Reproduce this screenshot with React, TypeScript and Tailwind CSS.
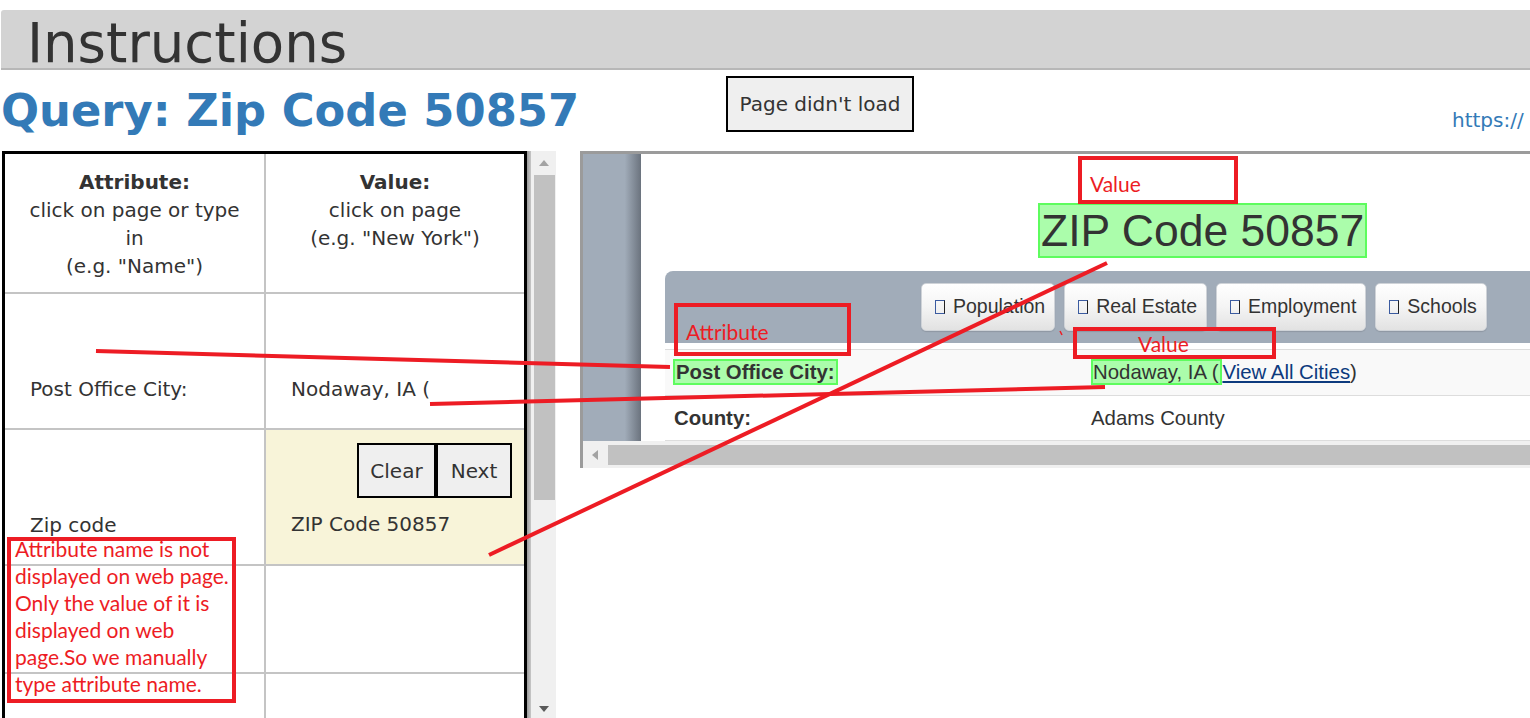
import React from "react";

const RED = "#ed1c24";

function Tofu() {
  return <span className="inline-block w-[10px] h-[14px] border border-[#3b5ba0] border-r-[#222] box-border" />;
}

function NavButton({ label }: { label: string }) {
  return (
    <div className="h-[48px] flex items-center gap-[8px] pl-[13px] pr-[9px] rounded-[5px] border border-[#cfd3d8] bg-[linear-gradient(to_bottom,#ffffff_0%,#f4f4f4_50%,#e2e2e2_100%)] shadow-[0_1px_1px_rgba(0,0,0,0.12)] text-[19.5px] text-[#333] whitespace-nowrap">
      <Tofu />
      <span>{label}</span>
    </div>
  );
}

function Cell({ children, className = "" }: { children?: React.ReactNode; className?: string }) {
  return <div className={"pl-[25px] pt-[81px] leading-[28px] whitespace-nowrap " + className}>{children}</div>;
}

export default function App() {
  return (
    <div className="relative w-[1530px] h-[718px] overflow-hidden bg-white text-[#333] font-['DejaVu_Sans',Verdana,sans-serif]">
      {/* Header bar */}
      <div className="mt-[10px] ml-[1px] h-[60px] box-border border-b-2 border-[#b7b7b7] bg-[#d3d3d3] rounded-tl-[3px] pl-[26px] pt-[6px] text-[54.5px] leading-[54px] text-[#333] whitespace-nowrap">
        Instructions
      </div>

      {/* Title row */}
      <div className="flex h-[81px]">
        <h1 className="w-[726px] shrink-0 pl-[1px] pt-[15px] text-[44.8px] leading-[52px] font-bold text-[#337ab7] whitespace-nowrap">
          Query: Zip Code 50857
        </h1>
        <button className="mt-[6px] w-[188px] h-[56px] shrink-0 box-border border-2 border-black bg-[#efefef] text-[20px] text-[#333] whitespace-nowrap">
          Page didn't load
        </button>
        <a className="ml-[538px] mt-[36px] text-[20px] leading-[28px] text-[#337ab7] whitespace-nowrap">https://</a>
      </div>

      {/* Main area */}
      <div className="flex h-[567px] items-start">
        {/* Left table */}
        <div className="ml-[2px] w-[525px] h-full shrink-0 box-border border-[3px] border-b-0 border-black overflow-hidden text-[20px] text-[#333]">
          {/* header row */}
          <div className="flex h-[140px] box-border border-b-2 border-[#c4c4c4]">
            <div className="w-[261px] shrink-0 box-border border-r-2 border-[#c4c4c4] pt-[14px] text-center leading-[28px]">
              <div className="font-bold">Attribute:</div>
              <div>click on page or type</div>
              <div>in</div>
              <div>(e.g. "Name")</div>
            </div>
            <div className="flex-1 pt-[14px] text-center leading-[28px]">
              <div className="font-bold">Value:</div>
              <div>click on page</div>
              <div>(e.g. "New York")</div>
            </div>
          </div>
          {/* row 2 */}
          <div className="flex h-[136px] box-border border-b-2 border-[#c4c4c4]">
            <Cell className="w-[261px] shrink-0 box-border border-r-2 border-[#c4c4c4]">Post Office City:</Cell>
            <Cell className="flex-1">Nodaway, IA (</Cell>
          </div>
          {/* row 3 */}
          <div className="flex h-[136px] box-border border-b-2 border-[#c4c4c4]">
            <Cell className="w-[261px] shrink-0 box-border border-r-2 border-[#c4c4c4]">Zip code</Cell>
            <div className="flex-1 flex flex-col bg-[#f8f4d9]">
              <div className="mt-[13px] mr-[12px] self-end flex">
                <button className="w-[79px] h-[55px] box-border border-2 border-black bg-[#efefef] text-[20px] text-[#333]">Clear</button>
                <button className="w-[76px] h-[55px] box-border border-2 border-black bg-[#efefef] text-[20px] text-[#333]">Next</button>
              </div>
              <div className="mt-[12px] pl-[25px] leading-[28px] whitespace-nowrap">ZIP Code 50857</div>
            </div>
          </div>
          {/* row 4 */}
          <div className="flex h-[108px] box-border border-b-2 border-[#c4c4c4]">
            <div className="w-[261px] shrink-0 box-border border-r-2 border-[#c4c4c4]" />
            <div className="flex-1" />
          </div>
          {/* row 5 */}
          <div className="flex h-[108px] box-border border-b-2 border-[#c4c4c4]">
            <div className="w-[261px] shrink-0 box-border border-r-2 border-[#c4c4c4]" />
            <div className="flex-1" />
          </div>
        </div>
        {/* shadow strip */}
        <div className="w-[4px] h-full shrink-0 bg-[linear-gradient(to_right,#9a9a9a,#c8c8c8)]" />
        {/* vertical scrollbar */}
        <div className="w-[25px] h-full shrink-0 bg-[#f0f0f0] flex flex-col items-center">
          <div className="mt-[9px] w-0 h-0 border-l-[5px] border-r-[5px] border-b-[6px] border-l-transparent border-r-transparent border-b-[#a3a3a3]" />
          <div className="mt-[9px] ml-[2px] w-[21px] h-[325px] bg-[#c1c1c1]" />
          <div className="mt-auto mb-[6px] w-0 h-0 border-l-[5px] border-r-[5px] border-t-[6px] border-l-transparent border-r-transparent border-t-[#5a5a5a]" />
        </div>

        {/* Right frame */}
        <div className="ml-[24px] flex-1 min-w-0 h-[317px] box-border border-t-[3px] border-l-[3px] border-[#9b9b9b] flex flex-col overflow-hidden">
          <div className="flex h-[287px] shrink-0">
            <div className="w-[58px] shrink-0 h-full bg-[linear-gradient(to_right,#a1acb9_0%,#a1acb9_72%,#6b737e_100%)]" />
            <div className="flex-1 min-w-0 overflow-hidden font-['Liberation_Sans',Arial,sans-serif] text-[#333]">
              <div className="flex pt-[49px] pl-[397px] whitespace-nowrap">
                <span className="inline-block border-2 border-[#5efc5e] bg-[#abfdab] px-[1px] text-[44.5px] leading-[51px]">
                  ZIP Code 50857
                </span>
              </div>
              <div className="mt-[13px] ml-[24px] w-[1000px] h-[72px] bg-[#a1acb9] rounded-tl-[8px] flex items-start pt-[12px] pl-[256px] gap-[9px]">
                <NavButton label="Population" />
                <NavButton label="Real Estate" />
                <NavButton label="Employment" />
                <NavButton label="Schools" />
              </div>
              <div className="mt-[6px] ml-[24px] w-[1000px] border-t border-[#dddddd] text-[20.4px]">
                <div className="flex items-center h-[46px] box-border border-b border-[#dddddd] bg-[#f9f9f9] whitespace-nowrap">
                  <div className="w-[426px] shrink-0 pl-[8px]">
                    <span className="border-2 border-[#5efc5e] bg-[#abfdab] px-[1px] font-bold">Post Office City:</span>
                  </div>
                  <div>
                    <span className="border-2 border-[#5efc5e] bg-[#abfdab] pl-[0px] pr-[2px]">Nodaway, IA (</span>
                    <a className="text-[#0d3a7e] underline">View All Cities</a>)
                  </div>
                </div>
                <div className="flex items-center h-[45px] box-border border-b border-[#dddddd] whitespace-nowrap">
                  <div className="w-[426px] shrink-0 pl-[9px] font-bold">County:</div>
                  <div>Adams County</div>
                </div>
              </div>
            </div>
          </div>
          {/* horizontal scrollbar */}
          <div className="h-[27px] shrink-0 bg-[#f0f0f0] flex items-center">
            <div className="ml-[9px] w-0 h-0 border-t-[5px] border-b-[5px] border-r-[6px] border-t-transparent border-b-transparent border-r-[#a3a3a3]" />
            <div className="ml-[10px] flex-1 h-[20px] bg-[#c1c1c1]" />
          </div>
        </div>
      </div>

      {/* Annotations overlay */}
      <svg className="absolute left-0 top-0 pointer-events-none" width="1530" height="718">
        <line x1="96" y1="351" x2="670" y2="367" stroke={RED} strokeWidth="4" />
        <line x1="430" y1="404" x2="1105" y2="387" stroke={RED} strokeWidth="4" />
        <line x1="489" y1="555" x2="1107" y2="263" stroke={RED} strokeWidth="4" />
        <line x1="1060" y1="331" x2="1062" y2="335" stroke={RED} strokeWidth="1.5" />
      </svg>

      <div className="absolute left-[1078px] top-[156px] w-[160px] h-[48px] box-border border-4 border-[#ed1c24] font-['Lato',sans-serif] text-[21px] leading-[27px] text-[#ed1c24] pl-[8px] pt-[10px]">
        Value
      </div>
      <div className="absolute left-[674px] top-[303px] w-[177px] h-[53px] box-border border-4 border-[#ed1c24] font-['Lato',sans-serif] text-[21px] leading-[27px] text-[#ed1c24] pl-[8px] pt-[11px]">
        Attribute
      </div>
      <div className="absolute left-[1073px] top-[327px] w-[203px] h-[32px] box-border border-4 border-[#ed1c24] font-['Lato',sans-serif] text-[21px] leading-[27px] text-[#ed1c24] pl-[61px] -pt-[0px] overflow-visible">
        <div className="-mt-[1px]">Value</div>
      </div>
      <div className="absolute left-[7px] top-[537px] w-[229px] h-[166px] box-border border-4 border-[#ed1c24]">
        <div className="-mt-[6px] ml-[4px] font-['Lato',sans-serif] text-[21px] leading-[27px] text-[#ed1c24] whitespace-nowrap">
          Attribute name is not<br />
          displayed on web page.<br />
          Only the value of it is<br />
          displayed on web<br />
          page.So we manually<br />
          type attribute name.
        </div>
      </div>
    </div>
  );
}
